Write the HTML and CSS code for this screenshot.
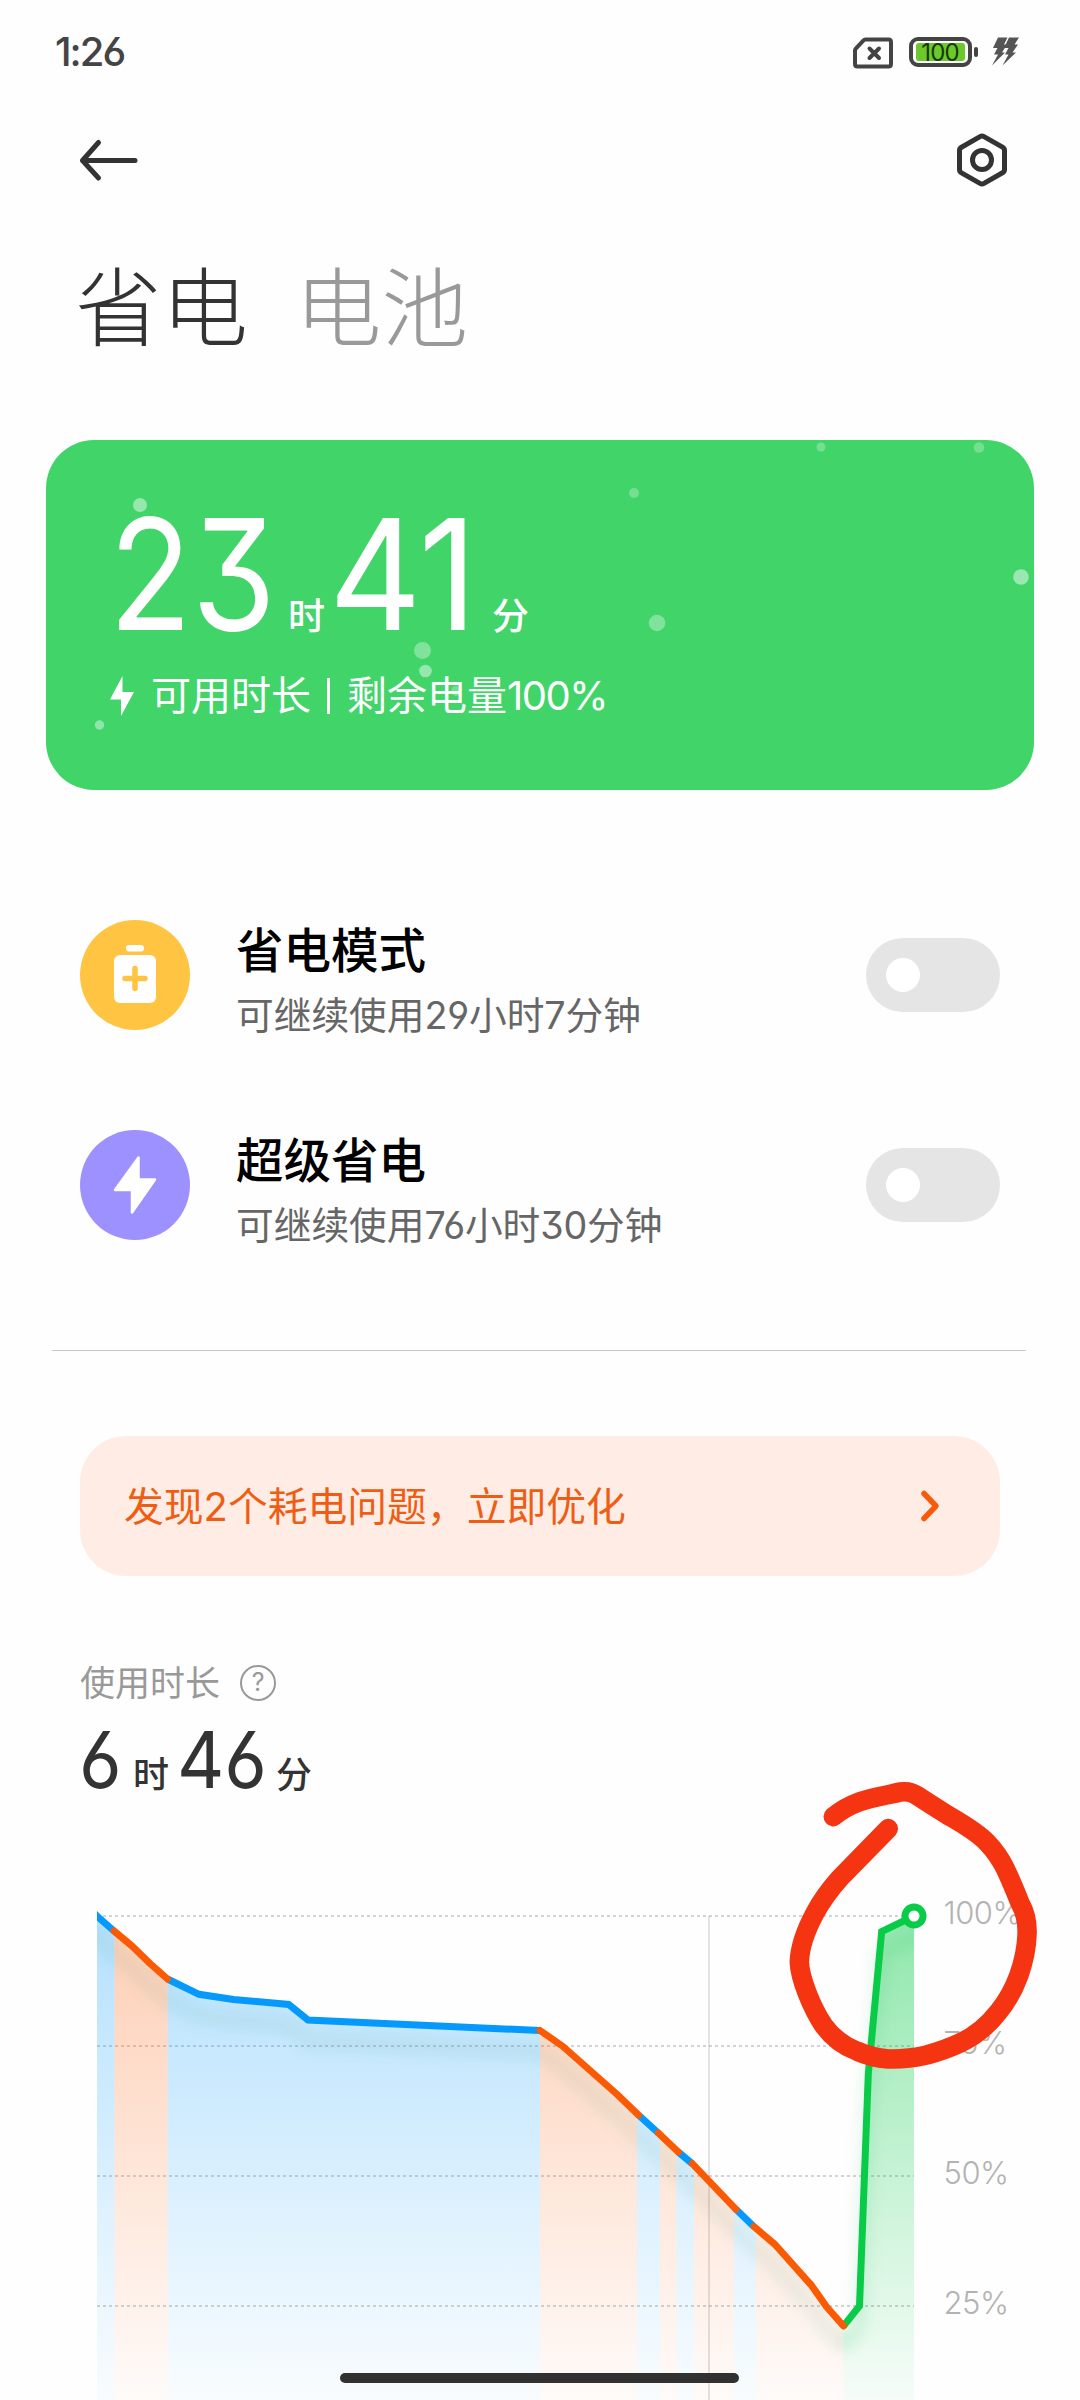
FILE: index.html
```html
<!DOCTYPE html>
<html lang="zh-CN">
<head>
<meta charset="utf-8">
<title>省电</title>
<link rel="stylesheet" href="styles.css">
</head>
<body>
<div class="screen">
  <header class="status">
    <span class="clock">1:26</span>
    <div class="status-icons">
      <svg class="sim" width="40" height="32" viewBox="0 0 40 32"><path d="M12.500 2.500H35.500Q38 2.500 38 5V27Q38 29.500 35.500 29.500H4.500Q2 29.500 2 27V13.500Q2 12.500 2.800 11.600L10.500 3.400Q11.300 2.500 12.500 2.500Z" fill="none" stroke="#444" stroke-width="4"/><path d="M16.500 11.500l9.500 9.500M26 11.500l-9.500 9.500" stroke="#444" stroke-width="4" stroke-linecap="round"/></svg>
      <div class="battery"><span class="level">100</span></div>
      <svg class="charge" width="28" height="30" viewBox="0 0 28 30" fill="#555"><path d="M6 0.500H15.500L12 7.500H15L10 15.500H13L0 28.500L6 17.500H2L5.500 11H1Z"/><path d="M17 0.500H27L22.500 7.500H26L20.500 15.500H24L10.500 28.500L16.500 17.500H13L16.500 11H12Z"/></svg>
    </div>
  </header>

  <nav class="toolbar">
    <svg width="60" height="60" viewBox="0 0 60 60"><path d="M57 30.500H4.500M20.500 12.500L4.500 30.500L20.500 48" fill="none" stroke="#333" stroke-width="5" stroke-linecap="round" stroke-linejoin="round"/></svg>
    <svg width="60" height="60" viewBox="0 0 60 60"><path d="M28 6.600Q30 5.500 32 6.600L50.500 17.200Q52.500 18.300 52.500 20.500V39.500Q52.500 41.700 50.500 42.800L32 53.400Q30 54.500 28 53.400L9.500 42.800Q7.500 41.700 7.500 39.500V20.500Q7.500 18.300 9.500 17.200Z" fill="none" stroke="#333" stroke-width="5"/><circle cx="30" cy="30" r="9.500" fill="none" stroke="#333" stroke-width="5"/></svg>
  </nav>

  <div class="tabs"><span class="tab on">省电</span><span class="tab">电池</span></div>

  <section class="card">
    <svg class="bubbles" width="988" height="350" viewBox="0 0 988 350" fill="#fff">
      <circle cx="94" cy="65" r="7" opacity=".45"/><circle cx="588" cy="53" r="5" opacity=".27"/><circle cx="775" cy="7" r="4.500" opacity=".27"/><circle cx="933" cy="7.500" r="5.300" opacity=".27"/><circle cx="975" cy="137" r="7.800" opacity=".47"/><circle cx="611" cy="183" r="8.300" opacity=".34"/><circle cx="376.500" cy="210.500" r="8.500" opacity=".34"/><circle cx="379.500" cy="231" r="6.300" opacity=".45"/><circle cx="53.500" cy="285" r="4.700" opacity=".42"/><circle cx="410" cy="251" r="5" opacity=".25"/>
    </svg>
    <div class="big"><span class="n n1"><i>23</i></span><span class="u">时</span><span class="n n2"><i>41</i></span><span class="u">分</span></div>
    <div class="sub"><svg width="24" height="40" viewBox="0 0 24 40"><path d="M12.500 0V16H24L11 40V23.500H0Z" fill="#fff"/></svg><span class="avail">可用时长</span><b class="bar"></b><span class="left">剩余电量<em>100%</em></span></div>
  </section>

  <section class="modes">
    <div class="row">
      <div class="ico yellow"><svg width="110" height="110" viewBox="0 0 110 110"><rect x="46" y="25" width="18" height="6.500" rx="3" fill="#fff"/><rect x="34" y="35" width="42" height="48" rx="6" fill="#fff"/><path d="M55 48.500V68.500M45 58.500H65" stroke="#ffc442" stroke-width="5.500" stroke-linecap="round"/></svg></div>
      <div class="txt"><h2>省电模式</h2><p>可继续使用<em>29</em>小时<em>7</em>分钟</p></div>
      <div class="switch"></div>
    </div>
    <div class="row">
      <div class="ico purple"><svg width="110" height="110" viewBox="0 0 110 110"><path d="M58.500 27.500V49.500H75L52 82.500V60H35Z" fill="#fff" stroke="#fff" stroke-width="2.500" stroke-linejoin="round"/></svg></div>
      <div class="txt"><h2>超级省电</h2><p>可继续使用<em>76</em>小时<em>30</em>分钟</p></div>
      <div class="switch"></div>
    </div>
  </section>

  <hr class="rule">

  <section class="banner"><span>发现<em>2</em>个耗电问题，立即优化</span>
    <svg width="24" height="34" viewBox="0 0 24 34"><path d="M5 4.500L17 17L5 29.500" fill="none" stroke="#f85a0a" stroke-width="5.500" stroke-linecap="round" stroke-linejoin="round"/></svg>
  </section>

  <section class="usage">
    <div class="usage-label"><span>使用时长</span><div class="help">?</div></div>
    <div class="usage-time"><span class="n m1"><i>6</i></span><span class="u">时</span><span class="n m2"><i>46</i></span><span class="u">分</span></div>
  </section>

  <section class="chart">
    <svg width="1080" height="640" viewBox="0 1760 1080 640">
      <defs>
        <linearGradient id="gb" gradientUnits="userSpaceOnUse" x1="0" y1="1916" x2="0" y2="2436"><stop offset="0" stop-color="#0099ff" stop-opacity=".29"/><stop offset="1" stop-color="#0099ff" stop-opacity="0"/></linearGradient>
        <linearGradient id="go" gradientUnits="userSpaceOnUse" x1="0" y1="1916" x2="0" y2="2436"><stop offset="0" stop-color="#ff5a00" stop-opacity=".29"/><stop offset="1" stop-color="#ff5a00" stop-opacity="0"/></linearGradient>
        <linearGradient id="gg" gradientUnits="userSpaceOnUse" x1="0" y1="1916" x2="0" y2="2436"><stop offset="0" stop-color="#08cc48" stop-opacity=".45"/><stop offset="1" stop-color="#08cc48" stop-opacity="0"/></linearGradient>
        <clipPath id="under"><path d="M97 1916L114 1931L132 1946L150 1963.500L167.500 1979L199 1994.300L233.500 1999.500L288.700 2004.500L308 2020L540 2030.500L563 2046.500L616.700 2094L638.500 2115L658.300 2133L678.300 2152L692.300 2163.700L736 2209.300L754 2226.700L775 2244.500L800 2272.700L811.700 2285.700L826.700 2307L843.500 2326L859.500 2306L868.300 2074L881.700 1931.500L914 1916V2400H97Z"/></clipPath>
        <clipPath id="plot"><rect x="97" y="1900" width="830" height="500"/></clipPath>
        <clipPath id="plot-fill"><rect x="97" y="1900" width="817" height="500"/></clipPath>
        <filter id="soft" x="-10%" y="-10%" width="120%" height="120%"><feGaussianBlur stdDeviation="7"/></filter>
      </defs>
      <g stroke="#000" stroke-opacity=".17" stroke-width="2" stroke-dasharray="3 3"><path d="M97 1916H914M97 2046H914M97 2176H914M97 2306H914"/></g>
      <path d="M709 1916V2400" stroke="#000" stroke-opacity=".11" stroke-width="2"/>
      <g clip-path="url(#under)">
        <path fill="url(#gb)" d="M97 1900h17.500v500h-17.500zM167.500 1900h372.500v500h-372.500zM637 1900h23v500h-23zM676.500 1900h17.500v500h-17.500zM734 1900h22v500h-22z"/>
        <path fill="url(#go)" d="M114.500 1900h53v500h-53zM540 1900h97v500h-97zM660 1900h16.500v500h-16.500zM694 1900h40v500h-40zM756 1900h87.500v500h-87.500z"/>
        <path fill="url(#gg)" d="M843.500 1900h71v500h-71z"/>
      </g>
      <g clip-path="url(#plot-fill)" fill="none" stroke-width="14">
        <path transform="translate(0 21)" filter="url(#soft)" stroke="#3c9678" stroke-opacity=".11" d="M80 1901L97 1916L114 1931L132 1946L150 1963.500L167.500 1979L199 1994.300L233.500 1999.500L288.700 2004.500L308 2020L540 2030.500L563 2046.500L616.700 2094L638.500 2115L658.300 2133L678.300 2152L692.300 2163.700L736 2209.300L754 2226.700L775 2244.500L811.700 2285.700L826.700 2307L843.500 2326"/>
        <path transform="translate(0 21)" filter="url(#soft)" stroke="#08b048" stroke-opacity=".11" d="M843.500 2326L859.500 2306L868.300 2074L881.700 1931.500L930 1910"/>
      </g>
      <g clip-path="url(#plot)">
        <g fill="none" stroke-width="7" stroke-linejoin="miter">
          <path stroke="#0499fb" d="M94 1913L97 1916L114 1931M167.500 1979L199 1994.300L233.500 1999.500L288.700 2004.500L308 2020L540 2030.500M638.500 2115L658.300 2133M678.300 2152L692.300 2163.700M736 2209.300L754 2226.700"/>
          <path stroke="#08cc48" d="M843.500 2326L859.500 2306L868.300 2074L881.700 1931.500L914 1916"/>
          <path stroke="#fb5a04" stroke-linecap="round" stroke-linejoin="round" d="M114 1931L132 1946L150 1963.500L167.500 1979M540 2030.500L563 2046.500L616.700 2094L638.500 2115M658.300 2133L678.300 2152M692.300 2163.700L736 2209.300M754 2226.700L775 2244.500L811.700 2285.700L826.700 2307L843.500 2326"/>
        </g>
        <circle cx="914" cy="1916" r="9" fill="#fff" stroke="#08cc48" stroke-width="7"/>
      </g>
      <g class="axis"><text x="943.500" y="1924">100%</text><text x="943.500" y="2054">75%</text><text x="943.500" y="2184">50%</text><text x="943.500" y="2314">25%</text></g>
      <path fill="none" stroke="#f53411" stroke-width="19.500" stroke-linecap="round" stroke-linejoin="round" d="M833.300 1816.700Q844 1807.500 860 1801.600C873 1797 889 1795 900 1792Q910 1790.500 917 1795.500Q930 1804 946.700 1814.500C961 1823 976 1831 987 1842.500Q998 1854 1005 1868Q1012 1883 1020 1903Q1028 1917 1027 1935Q1026.500 1953 1019 1975Q1011 1997 998.300 2012Q982 2033 960 2043Q945 2050 926.700 2055Q907 2059.500 888.300 2059Q871 2057.500 856.700 2051Q836 2043 823.300 2025C812 2008 800 1979 799.300 1962C800 1944 808 1926 815 1913Q824 1896 840 1878L888.300 1828.600"/>
    </svg>
  </section>
  <div class="home"></div>
</div>
</body>
</html>
```
FILE: styles.css
```css
* { box-sizing: border-box; margin: 0; padding: 0; }
body { background: #fefefe; font-family: Inter, "Noto Sans CJK SC", sans-serif; font-feature-settings: "cv09", "cv03", "cv04"; color: #333; }
em, i { font-style: normal; }
svg { display: block; flex: none; }
.screen { position: relative; width: 1080px; height: 2400px; overflow: hidden; display: flex; flex-direction: column; }

.status { height: 100px; padding: 0 60px 0 55px; display: flex; justify-content: space-between; align-items: flex-start; color: #444; }
.clock { margin-top: 28px; font-size: 40px; line-height: 48px; font-weight: 500; letter-spacing: -2px; }
.status-icons { display: flex; padding-top: 37px; }
.sim { margin-right: 16px; }
.battery { position: relative; width: 63px; height: 30px; margin-right: 20px; border: 4px solid #444; border-radius: 9px; display: flex; padding: 2px 3px; }
.battery::after { content: ""; position: absolute; left: 61px; top: 6px; width: 4px; height: 10px; border-radius: 2px; background: #444; }
.level { flex: 1; background: #6cc82b; border-radius: 3px; color: #173a08; font-size: 24px; line-height: 20px; text-align: center; letter-spacing: -.8px; text-indent: -1px; }

.toolbar { height: 120px; padding: 30px 68px 0 78px; display: flex; justify-content: space-between; }
.tabs { height: 220px; padding: 19px 0 0 75px; display: flex; gap: 47px; font: 300 86.500px/128px "Noto Sans CJK SC", sans-serif; }
.tab { color: #999; }
.tab.on { color: #333; }

.card { position: relative; width: 988px; height: 350px; margin-left: 46px; border-radius: 48px; background: #41d469; overflow: hidden; color: #fff; flex: none; }
.bubbles { position: absolute; left: 0; top: 0; }
.big { position: relative; height: 200px; padding: 44px 0 0 63px; display: flex; align-items: baseline; }
.n { display: block; }
.n i { display: inline-block; transform-origin: 0 50%; transform: scaleX(.88); }
.big .n { font-size: 154px; line-height: 180px; font-weight: 400; }
.n1 { width: 179px; }
.n2 { width: 163px; margin-left: 4px; }
.n2 i { transform: scaleX(.93); }
.u { font-size: 37px; line-height: 40px; font-weight: 500; }
.sub { position: relative; height: 60px; margin-top: 26px; padding-left: 64px; display: flex; align-items: center; font-size: 40px; line-height: 60px; }
.avail { margin-left: 17px; }
.bar { width: 3.500px; height: 36px; margin: 0 17px 0 15.500px; background: #fff; }
.sub em { letter-spacing: -1.5px; }

.modes { height: 560px; padding: 105px 80px 0; flex: none; }
.row { height: 210px; padding-top: 25px; display: flex; align-items: flex-start; }
.ico { width: 110px; height: 110px; border-radius: 50%; }
.yellow { background: #ffc442; }
.purple { background: #9d91ff; }
.txt { margin-left: 46px; flex: 1; }
h2 { font-size: 47.500px; line-height: 64px; font-weight: 500; color: #000; margin-top: -1px; }
.txt p { font-size: 37.700px; line-height: 62px; margin-top: 1px; color: #666; }
.txt em { letter-spacing: -.2px; }
.switch { width: 134px; height: 74px; margin-top: 18px; padding: 20px; border-radius: 37px; background: #e5e5e5; }
.switch::before { content: ""; display: block; width: 34px; height: 34px; border-radius: 50%; background: #fff; }

.rule { width: 974px; height: 1px; margin: 0 0 1px 52px; border: 0; background: #c8c8c8; flex: none; }
.banner { width: 920px; height: 140px; margin: 84px 0 0 80px; padding: 0 57px 0 44px; border-radius: 46px; background: #ffede5; display: flex; align-items: center; justify-content: space-between; color: #ef5d14; font-size: 39.800px; flex: none; }
.banner span { padding-bottom: 5px; }
.usage { height: 184px; padding: 85px 0 0 80px; flex: none; }
.usage-label { display: flex; align-items: center; height: 44px; color: #999; font-size: 35px; line-height: 44px; }
.help { width: 36px; height: 36px; margin-left: 20px; border: 2.500px solid #999; border-radius: 50%; font-size: 25px; line-height: 31px; text-align: center; }
.usage-time { display: flex; align-items: baseline; height: 90px; margin-top: 10px; }
.usage-time .n { font-size: 78px; line-height: 90px; }
.usage-time .n i { transform: scaleX(.94); }
.usage-time .u { font-size: 36px; }
.m1 { width: 54px; margin-left: -1px; }
.m2 { width: 99px; margin-left: 8px; }

.chart { flex: none; height: 640px; }
.axis { font: 300 31px Inter, sans-serif; letter-spacing: -.5px; fill: #b3b3b3; }
.home { position: absolute; left: 340px; top: 2373px; width: 399px; height: 10px; border-radius: 5px; background: #313131; }
```
